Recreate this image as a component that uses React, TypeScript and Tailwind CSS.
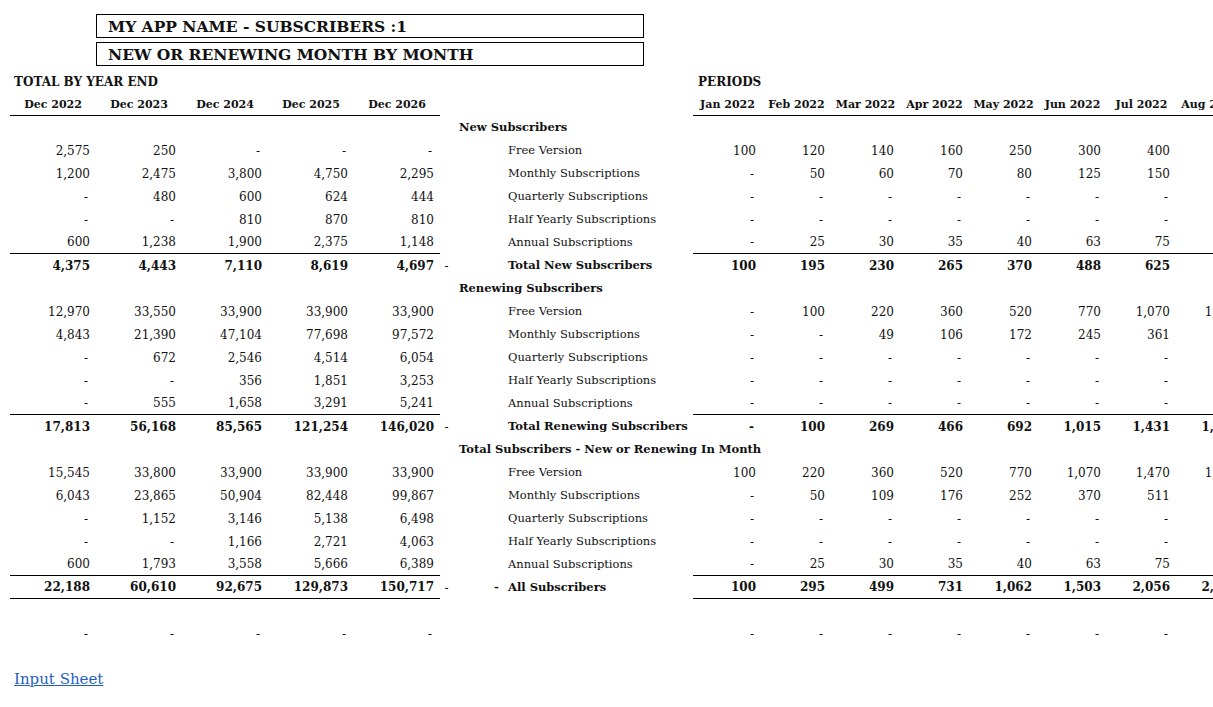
import { FC } from "react";

type Row = {
  kind: "section" | "item" | "total" | "blank";
  label?: string;
  left?: string[];
  right?: string[];
  line?: boolean;
  mid?: string;
  pre?: string;
};

const D = ["-", "-", "-", "-", "-"];
const DR = ["-", "-", "-", "-", "-", "-", "-", "-"];

const rows: Row[] = [
  { kind: "section", label: "New Subscribers" },
  { kind: "item", label: "Free Version", left: ["2,575", "250", "-", "-", "-"], right: ["100", "120", "140", "160", "250", "300", "400", "500"] },
  { kind: "item", label: "Monthly Subscriptions", left: ["1,200", "2,475", "3,800", "4,750", "2,295"], right: ["-", "50", "60", "70", "80", "125", "150", "175"] },
  { kind: "item", label: "Quarterly Subscriptions", left: ["-", "480", "600", "624", "444"], right: DR },
  { kind: "item", label: "Half Yearly Subscriptions", left: ["-", "-", "810", "870", "810"], right: DR },
  { kind: "item", label: "Annual Subscriptions", left: ["600", "1,238", "1,900", "2,375", "1,148"], right: ["-", "25", "30", "35", "40", "63", "75", "88"], line: true },
  { kind: "total", label: "Total New Subscribers", mid: "-", left: ["4,375", "4,443", "7,110", "8,619", "4,697"], right: ["100", "195", "230", "265", "370", "488", "625", "763"] },
  { kind: "section", label: "Renewing Subscribers" },
  { kind: "item", label: "Free Version", left: ["12,970", "33,550", "33,900", "33,900", "33,900"], right: ["-", "100", "220", "360", "520", "770", "1,070", "1,470"] },
  { kind: "item", label: "Monthly Subscriptions", left: ["4,843", "21,390", "47,104", "77,698", "97,572"], right: ["-", "-", "49", "106", "172", "245", "361", "498"] },
  { kind: "item", label: "Quarterly Subscriptions", left: ["-", "672", "2,546", "4,514", "6,054"], right: DR },
  { kind: "item", label: "Half Yearly Subscriptions", left: ["-", "-", "356", "1,851", "3,253"], right: DR },
  { kind: "item", label: "Annual Subscriptions", left: ["-", "555", "1,658", "3,291", "5,241"], right: DR, line: true },
  { kind: "total", label: "Total Renewing Subscribers", mid: "-", left: ["17,813", "56,168", "85,565", "121,254", "146,020"], right: ["-", "100", "269", "466", "692", "1,015", "1,431", "1,968"] },
  { kind: "section", label: "Total Subscribers - New or Renewing In Month" },
  { kind: "item", label: "Free Version", left: ["15,545", "33,800", "33,900", "33,900", "33,900"], right: ["100", "220", "360", "520", "770", "1,070", "1,470", "1,970"] },
  { kind: "item", label: "Monthly Subscriptions", left: ["6,043", "23,865", "50,904", "82,448", "99,867"], right: ["-", "50", "109", "176", "252", "370", "511", "673"] },
  { kind: "item", label: "Quarterly Subscriptions", left: ["-", "1,152", "3,146", "5,138", "6,498"], right: DR },
  { kind: "item", label: "Half Yearly Subscriptions", left: ["-", "-", "1,166", "2,721", "4,063"], right: DR },
  { kind: "item", label: "Annual Subscriptions", left: ["600", "1,793", "3,558", "5,666", "6,389"], right: ["-", "25", "30", "35", "40", "63", "75", "88"], line: true },
  { kind: "total", label: "All Subscribers", mid: "-", pre: "-", left: ["22,188", "60,610", "92,675", "129,873", "150,717"], right: ["100", "295", "499", "731", "1,062", "1,503", "2,056", "2,731"], line: true },
  { kind: "blank" },
  { kind: "item", label: "", left: D, right: DR },
  { kind: "blank" },
];

const years = ["Dec 2022", "Dec 2023", "Dec 2024", "Dec 2025", "Dec 2026"];
const months = ["Jan 2022", "Feb 2022", "Mar 2022", "Apr 2022", "May 2022", "Jun 2022", "Jul 2022", "Aug 2022"];

const grid =
  "grid grid-cols-[10px_repeat(5,86px)_13px_240px_repeat(8,69px)] h-[23px] items-stretch";

const Num: FC<{ v: string; line?: boolean; bold?: boolean }> = ({ v, line, bold }) => (
  <div
    className={`flex items-center justify-end ${v === "-" ? "pr-[8px]" : "pr-[6px]"} ${
      line ? "border-b border-black" : ""
    } ${bold ? "font-bold" : ""}`}
  >
    {v}
  </div>
);

export default function App() {
  return (
    <div className="w-[1213px] h-[707px] overflow-hidden bg-white text-[12px] text-[#111] font-['DejaVu_Serif',serif]">
      <div className="pt-[14px] flex flex-col gap-[4px]">
        <div className="ml-[96px] w-[548px] h-[24px] border border-black pl-[11px] pt-[1px] flex items-center text-[15.5px] font-bold">
          MY APP NAME - SUBSCRIBERS :1
        </div>
        <div className="ml-[96px] w-[548px] h-[24px] border border-black pl-[11px] pt-[1px] flex items-center text-[15.5px] font-bold">
          NEW OR RENEWING MONTH BY MONTH
        </div>
      </div>

      <div className="mt-[4px]">
        <div className={`${grid} font-bold`}>
          <div className="col-span-8 flex items-center pl-[14px]">TOTAL BY YEAR END</div>
          <div className="col-span-8 flex items-center pl-[5px]">PERIODS</div>
        </div>

        <div className={`${grid} font-bold text-[11px]`}>
          <div />
          {years.map((y) => (
            <div key={y} className="flex items-center justify-center pt-[3px] border-b border-black">
              {y}
            </div>
          ))}
          <div />
          <div />
          {months.map((m) => (
            <div key={m} className="flex items-center justify-center pt-[3px] whitespace-nowrap border-b border-black">
              {m}
            </div>
          ))}
        </div>

        {rows.map((r, i) => {
          if (r.kind === "blank") return <div key={i} className="h-[23px]" />;
          if (r.kind === "section")
            return (
              <div key={i} className={grid}>
                <div className="col-span-7" />
                <div className="flex items-center pl-[6px] font-bold text-[11.5px] whitespace-nowrap">{r.label}</div>
              </div>
            );
          const bold = r.kind === "total";
          return (
            <div key={i} className={grid}>
              <div />
              {r.left!.map((v, j) => (
                <Num key={j} v={v} line={r.line} bold={bold} />
              ))}
              <div className="flex items-center justify-center">{r.mid}</div>
              <div className={`flex items-center whitespace-nowrap text-[11.5px] ${bold ? "font-bold" : ""}`}>
                <span className="w-[44px] pl-[41px]">{r.pre}</span>
                <span className="pl-[11px]">{r.label}</span>
              </div>
              {r.right!.map((v, j) => (
                <Num key={j} v={v} line={r.line} bold={bold} />
              ))}
            </div>
          );
        })}

        <div className="pl-[14px] h-[23px] flex items-center">
          <a href="#" className="text-[15px] text-[#1f5fbf] underline">
            Input Sheet
          </a>
        </div>
      </div>
    </div>
  );
}
